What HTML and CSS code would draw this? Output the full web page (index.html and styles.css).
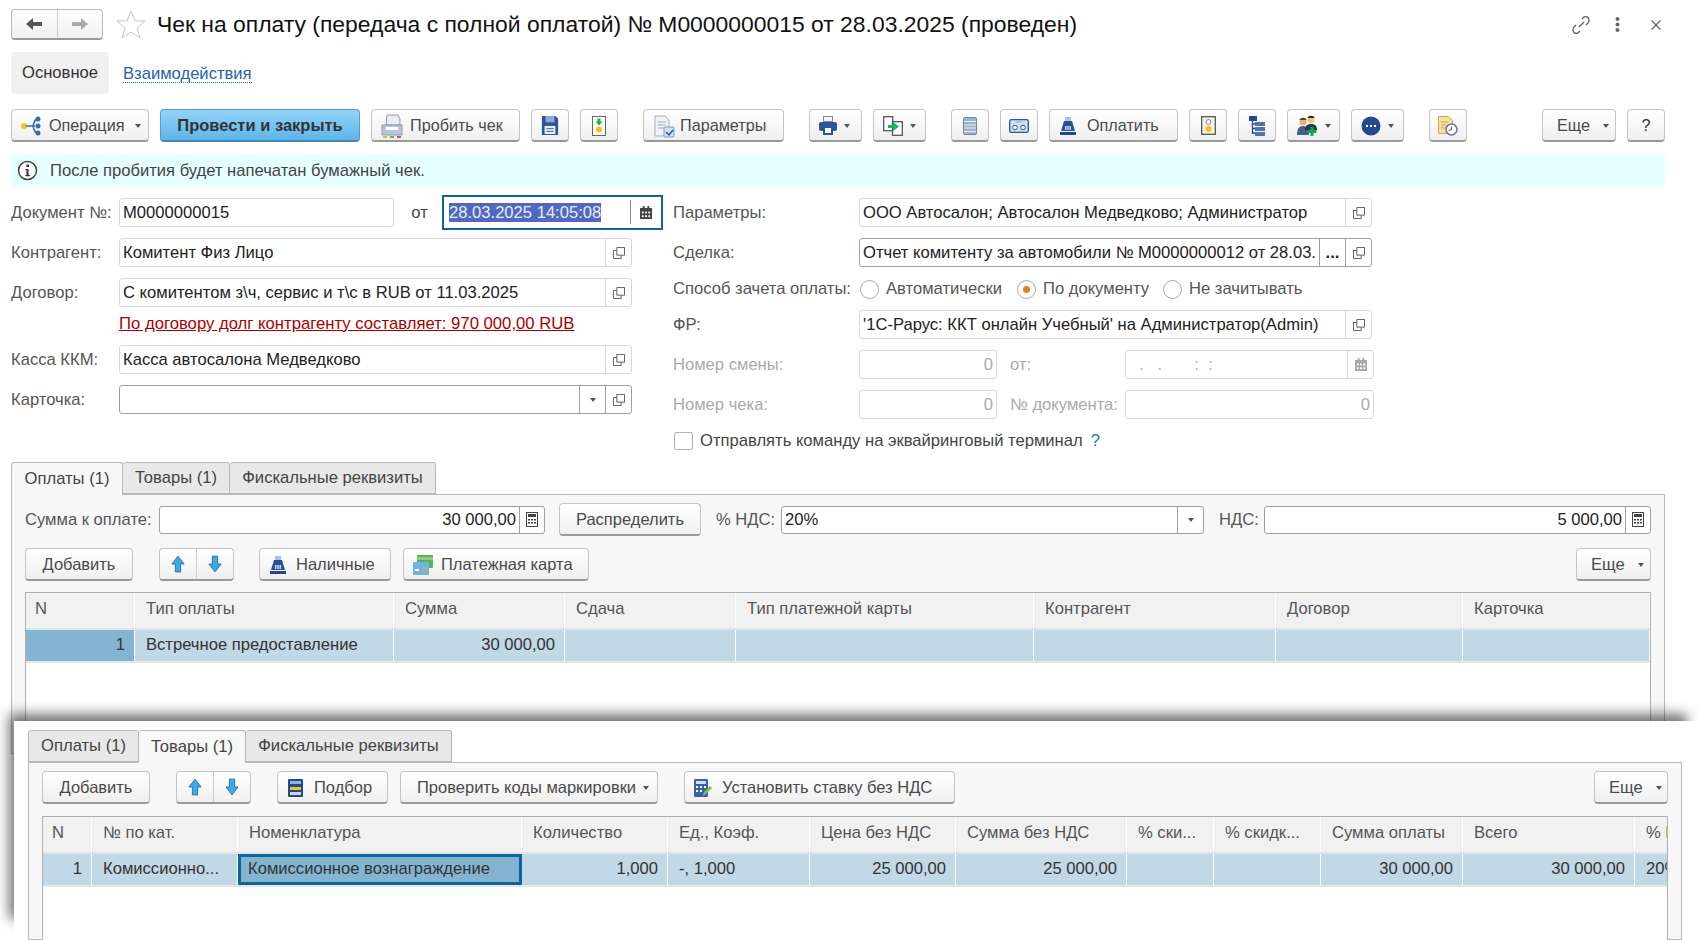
FILE: index.html
```html
<!DOCTYPE html>
<html>
<head>
    <title>Чек на оплату</title>
    <link rel="stylesheet" href="styles.css">
</head>
<body>
    <div class="titlebar">
        <div class="nav-group">
            <div class="nav-btn"><svg width="18" height="14" viewBox="0 0 18 14"><path d="M1 7l7-6v4h9v4H8v4z" fill="#555"/></svg></div>
            <div class="nav-btn"><svg width="18" height="14" viewBox="0 0 18 14"><path d="M17 7l-7-6v4H1v4h9v4z" fill="#aaa"/></svg></div>
        </div>
        <svg class="star" width="30" height="29" viewBox="0 0 30 29"><path d="M15 1l4 10h10l-8 7 3 10-9-6-9 6 3-10-8-7h10z" fill="#fff" stroke="#c4c4c4"/></svg>
        <h1 class="doc-title">Чек на оплату (передача с полной оплатой) № М0000000015 от 28.03.2025 (проведен)</h1>
        <div class="win-icons">
            <svg width="20" height="20" viewBox="0 0 20 20"><g fill="none" stroke="#666" stroke-width="1.4"><path d="M8 12l5-5"/><path d="M11 4l2-2c2-1 5 0 5 3 0 1 0 2-1 3l-2 2"/><path d="M9 16l-2 2c-2 1-5 0-5-3 0-1 0-2 1-3l2-2"/></g></svg>
            <svg class="dots" width="5" height="15" viewBox="0 0 5 15"><g fill="#666"><rect x="0.5" y="0" width="4" height="4" rx="2"/><rect x="0.5" y="5.5" width="4" height="4" rx="2"/><rect x="0.5" y="11" width="4" height="4" rx="2"/></g></svg>
            <svg class="close" width="10" height="10" viewBox="0 0 10 10"><path d="M0.5 0.5l9 9M9.5 0.5l-9 9" stroke="#666" stroke-width="1.3"/></svg>
        </div>
    </div>

    <div class="section-tabs">
        <div class="section-tab">Основное</div>
        <a class="section-link">Взаимодействия</a>
    </div>

    <div class="toolbar">
        <div class="btn w-op"><svg width="24" height="22" viewBox="0 0 24 22"><circle cx="4" cy="11" r="3" fill="#f5c518"/><path d="M6 11h9M17 4c-3 1-3 4-4 7 1 3 1 6 4 7" fill="none" stroke="#3a6cab" stroke-width="1.5"/><circle cx="18" cy="4" r="2.5" fill="#3a6cab"/><circle cx="18" cy="11" r="2.5" fill="#3a6cab"/><circle cx="18" cy="18" r="2.5" fill="#3a6cab"/></svg>Операция<span class="caret"></span></div>
        <div class="btn btn-main w-post">Провести и закрыть</div>
        <div class="btn w-chek"><svg width="24" height="24" viewBox="0 0 24 24"><path d="M7 1h11l2 4v6H6z" fill="#e8eef4" stroke="#8b9cb0"/><rect x="2" y="11" width="20" height="10" fill="#b5c7d9" stroke="#8b9cb0"/><rect x="6" y="13" width="12" height="3" fill="#fff"/><rect x="3" y="22" width="4" height="2" fill="#e8b820"/><rect x="10" y="22" width="4" height="2" fill="#5cb85c"/><rect x="17" y="22" width="4" height="2" fill="#d9534f"/></svg>Пробить чек</div>
        <div class="btn btn-icon"><svg width="18" height="19" viewBox="0 0 20 21"><path d="M1 0h15l3 3v18H1z" fill="#2c5597"/><rect x="5" y="0" width="10" height="7" fill="#8eaad3"/><rect x="4" y="11" width="12" height="9" fill="#e8edf5"/><path d="M6 14h8M6 17h8" stroke="#2c5597"/></svg></div>
        <div class="btn btn-icon"><svg width="14" height="20" viewBox="0 0 14 20"><rect x="0.5" y="0.500" width="13" height="19" fill="#fbfbf2" stroke="#666"/><path d="M5.500 2.500h3v3h2L7 9.500 3.500 5.500h2z" fill="#1fae5e"/><circle cx="7" cy="13.500" r="3" fill="#f2c21b"/></svg></div>
        <div class="btn w-param gap-l"><svg width="24" height="24" viewBox="0 0 24 24"><path d="M3 2h10l4 4v16H3z" fill="#eef3f8" stroke="#9fb2c6"/><path d="M6 8h8M6 11h8M6 14h6" stroke="#9fb2c6"/><rect x="12" y="13" width="10" height="10" rx="1" fill="#cfe0f0" stroke="#7f9cbc"/><path d="M14 18l3 3 4-5" fill="none" stroke="#2c5597" stroke-width="1.500"/></svg>Параметры</div>
        <div class="btn w-drop gap-l"><svg width="18" height="19" viewBox="0 0 18 19"><rect x="4.500" y="0.500" width="9" height="5" fill="#f2f4f7" stroke="#888"/><rect x="0" y="6" width="18" height="9" rx="2" fill="#2c5597"/><rect x="4" y="10" width="10" height="9" fill="#2c5597"/><rect x="6" y="12" width="6" height="5" fill="#fff"/></svg><span class="caret"></span></div>
        <div class="btn w-drop"><svg width="20" height="20" viewBox="0 0 20 20"><rect x="0.700" y="0.700" width="9" height="14" fill="#fff" stroke="#555" stroke-width="1.300"/><rect x="9.500" y="5.700" width="9.800" height="13.600" fill="#fff" stroke="#555" stroke-width="1.300"/><path d="M5 9h5V6l6 4.500-6 4.500v-3H5z" fill="#16b45f"/></svg><span class="caret"></span></div>
        <div class="btn btn-icon gap-l"><svg width="14" height="18" viewBox="0 0 14 18"><rect x="0.500" y="0.500" width="13" height="17" rx="1" fill="#9db4ca" stroke="#6b8aa8"/><path d="M1 4.500h12M1 8h12M1 11h12M1 14.500h12" stroke="#e6edf4"/></svg></div>
        <div class="btn btn-icon"><svg width="20" height="14" viewBox="0 0 20 14"><rect x="0.700" y="0.700" width="18.600" height="12.600" rx="1.500" fill="#cfe2f2" stroke="#2c5597" stroke-width="1.300"/><circle cx="6" cy="8.500" r="2.300" fill="#fff" stroke="#2c5597"/><circle cx="14" cy="8.500" r="2.300" fill="#fff" stroke="#2c5597"/><path d="M7 3h6" stroke="#8fa9c9"/></svg></div>
        <div class="btn w-pay"><svg width="18" height="18" viewBox="0 0 18 18"><path d="M6 0h6v4H6z" fill="#a9c4e2"/><path d="M5 4h8l3 10H2z" fill="#2c4f95"/><path d="M6 9h1.500v4H6zM8.300 9h1.500v4H8.300zM10.500 9H12v4h-1.500z" fill="#cfdcee"/><rect x="1" y="15" width="16" height="3" fill="#23468c"/></svg>Оплатить</div>
        <div class="btn btn-icon"><svg width="15" height="19" viewBox="0 0 15 19"><rect x="0.700" y="0.700" width="13.600" height="17.600" fill="#f4f2ea" stroke="#555" stroke-width="1.300"/><circle cx="7.500" cy="6" r="2.500" fill="none" stroke="#888"/><circle cx="7.500" cy="13" r="3" fill="#f2c21b"/></svg></div>
        <div class="btn btn-icon"><svg width="16" height="20" viewBox="0 0 16 20"><rect x="0" y="0" width="8" height="5" fill="#23498f"/><path d="M3.500 5v13M3.500 8h3M3.500 12.500h3M3.500 17h3" stroke="#23498f" stroke-width="1.300"/><rect x="6" y="6" width="10" height="4" fill="#4f75ad"/><rect x="6" y="11" width="10" height="4" fill="#4f75ad"/><rect x="6" y="16" width="10" height="4" fill="#4f75ad"/></svg></div>
        <div class="btn w-drop"><svg width="21" height="21" viewBox="0 0 21 21"><circle cx="6" cy="7" r="3.500" fill="#e9b26f"/><path d="M2.500 5c0-3 7-3 7 0z" fill="#6b3d16"/><path d="M0 20c0-6 2-9 6-9s6 3 6 9z" fill="#3f5f8a"/><circle cx="14" cy="5" r="3.500" fill="#f0c58a"/><path d="M10.500 3c0-3 7-3 7 0z" fill="#2b2b2b"/><path d="M8 15c0-4 2-6 6-6s6 2 6 6z" fill="#27364f"/><path d="M15 12v9M10.500 16.500h9" stroke="#0da84f" stroke-width="3"/></svg><span class="caret"></span></div>
        <div class="btn w-drop"><svg width="20" height="20" viewBox="0 0 20 20"><circle cx="10" cy="10" r="9.500" fill="#23498f"/><g fill="#fff"><rect x="5" y="9" width="2" height="2"/><rect x="9" y="9" width="2" height="2"/><rect x="13" y="9" width="2" height="2"/></g></svg><span class="caret"></span></div>
        <div class="btn btn-icon gap-l"><svg width="20" height="20" viewBox="0 0 20 20"><path d="M0.500 0.500h10l4 4v13H0.500z" fill="#f5e0a0" stroke="#c9a94f"/><path d="M3 6h7M3 9h5M3 12h4" stroke="#c9a94f"/><circle cx="13.500" cy="13.500" r="5.500" fill="#fff" stroke="#5b7fb0" stroke-width="1.500"/><path d="M13.500 10.500v3l-3 1" fill="none" stroke="#d9534f" stroke-width="1.300"/></svg></div>
        <div class="btn btn-more-drop w-more push-r">Еще<span class="caret"></span></div>
        <div class="btn btn-icon">?</div>
    </div>

    <div class="info-bar">
        <svg width="21" height="21" viewBox="0 0 21 21"><circle cx="10.500" cy="10.500" r="9" fill="#fff" stroke="#444" stroke-width="1.500"/><rect x="9.500" y="4.500" width="2.500" height="2.500" fill="#333"/><path d="M8.500 9h3v6h1.300v1.200H8.300V15h1.200v-4.800h-1z" fill="#333"/></svg>
        После пробития будет напечатан бумажный чек.
    </div>

    <div class="form">
        <div class="form-left">
            <div class="row">
                <label class="lbl">Документ №:</label>
                <div class="field w-number"><span class="val">М0000000015</span></div>
                <span class="lbl-from">от</span>
                <div class="field field-focus">
                    <span class="val"><span class="selected">28.03.2025 14:05:08</span></span>
                    <span class="fbtn btn-cal"><svg class="cal" width="12" height="13" viewBox="0 0 13 14"><path d="M0 2h3V0h2v2h3V0h2v2h3v12H0z" fill="#444"/><g fill="#fff"><rect x="2" y="6" width="2" height="2"/><rect x="5.500" y="6" width="2" height="2"/><rect x="9" y="6" width="2" height="2"/><rect x="2" y="10" width="2" height="2"/><rect x="5.500" y="10" width="2" height="2"/><rect x="9" y="10" width="2" height="2"/></g></svg></span>
                </div>
            </div>
            <div class="row">
                <label class="lbl">Контрагент:</label>
                <div class="field w-wide"><span class="val">Комитент Физ Лицо</span><span class="fbtn"><svg class="open" viewBox="0 0 14 14"><path d="M4.500 0.500h9v9h-9zM4 4H0.500v9.500h9V10" fill="none" stroke="#444"/></svg></span></div>
            </div>
            <div class="row">
                <label class="lbl">Договор:</label>
                <div class="field w-wide"><span class="val">С комитентом з\ч, сервис и т\с в RUB от 11.03.2025</span><span class="fbtn"><svg class="open" viewBox="0 0 14 14"><path d="M4.500 0.500h9v9h-9zM4 4H0.500v9.500h9V10" fill="none" stroke="#444"/></svg></span></div>
            </div>
            <a class="debt-link">По договору долг контрагенту составляет: 970 000,00 RUB</a>
            <div class="row">
                <label class="lbl">Касса ККМ:</label>
                <div class="field w-wide"><span class="val">Касса автосалона Медведково</span><span class="fbtn"><svg class="open" viewBox="0 0 14 14"><path d="M4.500 0.500h9v9h-9zM4 4H0.500v9.500h9V10" fill="none" stroke="#444"/></svg></span></div>
            </div>
            <div class="row">
                <label class="lbl">Карточка:</label>
                <div class="field w-wide field-dark"><span class="val"></span><span class="fbtn"><span class="caret"></span></span><span class="fbtn"><svg class="open" viewBox="0 0 14 14"><path d="M4.500 0.500h9v9h-9zM4 4H0.500v9.500h9V10" fill="none" stroke="#444"/></svg></span></div>
            </div>
        </div>

        <div class="form-right">
            <div class="row">
                <label class="lbl lbl-r">Параметры:</label>
                <div class="field w-right"><span class="val">ООО Автосалон; Автосалон Медведково; Администратор</span><span class="fbtn"><svg class="open" viewBox="0 0 14 14"><path d="M4.500 0.500h9v9h-9zM4 4H0.500v9.500h9V10" fill="none" stroke="#444"/></svg></span></div>
            </div>
            <div class="row">
                <label class="lbl lbl-r">Сделка:</label>
                <div class="field w-right field-dark"><span class="val">Отчет комитенту за автомобили № М0000000012 от 28.03.</span><span class="fbtn btn-more">...</span><span class="fbtn"><svg class="open" viewBox="0 0 14 14"><path d="M4.500 0.500h9v9h-9zM4 4H0.500v9.500h9V10" fill="none" stroke="#444"/></svg></span></div>
            </div>
            <div class="row row-radio">
                <label class="lbl lbl-r">Способ зачета оплаты:</label>
                <span class="radio radio-first"></span><span class="radio-text w-auto">Автоматически</span>
                <span class="radio radio-on"></span><span class="radio-text w-bydoc">По документу</span>
                <span class="radio"></span><span class="radio-text">Не зачитывать</span>
            </div>
            <div class="row">
                <label class="lbl lbl-r">ФР:</label>
                <div class="field w-right"><span class="val">'1С-Рарус: ККТ онлайн Учебный' на Администратор(Admin)</span><span class="fbtn"><svg class="open" viewBox="0 0 14 14"><path d="M4.500 0.500h9v9h-9zM4 4H0.500v9.500h9V10" fill="none" stroke="#444"/></svg></span></div>
            </div>
            <div class="row muted">
                <label class="lbl lbl-r">Номер смены:</label>
                <div class="field w-num-small"><span class="val val-right">0</span></div>
                <span class="lbl lbl-mid">от:</span>
                <div class="field w-num-big"><span class="val val-dots">.&nbsp;&nbsp;&nbsp;.&nbsp;&nbsp;&nbsp;&nbsp;&nbsp;&nbsp;&nbsp;:&nbsp;&nbsp;:</span><span class="fbtn btn-cal"><svg class="cal" width="12" height="13" viewBox="0 0 13 14"><path d="M0 2h3V0h2v2h3V0h2v2h3v12H0z" fill="#aaa"/><g fill="#fff"><rect x="2" y="6" width="2" height="2"/><rect x="5.500" y="6" width="2" height="2"/><rect x="9" y="6" width="2" height="2"/><rect x="2" y="10" width="2" height="2"/><rect x="5.500" y="10" width="2" height="2"/><rect x="9" y="10" width="2" height="2"/></g></svg></span></div>
            </div>
            <div class="row muted">
                <label class="lbl lbl-r">Номер чека:</label>
                <div class="field w-num-small"><span class="val val-right">0</span></div>
                <span class="lbl lbl-mid">№ документа:</span>
                <div class="field w-num-big"><span class="val val-right">0</span></div>
            </div>
            <div class="row-check">
                <span class="check"></span>Отправлять команду на эквайринговый терминал<span class="hint">?</span>
            </div>
        </div>
    </div>

    <div class="tabs">
        <div class="tab tab-on t-pay">Оплаты (1)</div>
        <div class="tab t-goods">Товары (1)</div>
        <div class="tab t-fisc">Фискальные реквизиты</div>
    </div>
    <div class="panel">
        <div class="pay-row">
            <span class="lbl-plain">Сумма к оплате:</span>
            <div class="field field-dark w-sum"><span class="val val-right">30 000,00</span><span class="fbtn btn-calc"><svg width="12" height="15" viewBox="0 0 12 15"><rect x="0.500" y="0.500" width="11" height="14" fill="#fff" stroke="#444"/><rect x="2" y="2" width="8" height="3" fill="#444"/><path d="M2 7h2v1.500H2zM5 7h2v1.500H5zM8 7h2v1.500H8zM2 10h2v1.500H2zM5 10h2v1.500H5zM8 10h2v1.500H8z" fill="#444"/></svg></span></div>
            <div class="btn w-split">Распределить</div>
            <span class="lbl-plain l-vat">% НДС:</span>
            <div class="field field-dark w-vat"><span class="val">20%</span><span class="fbtn"><span class="caret"></span></span></div>
            <span class="lbl-plain l-nds">НДС:</span>
            <div class="field field-dark w-nds"><span class="val val-right">5 000,00</span><span class="fbtn btn-calc"><svg width="12" height="15" viewBox="0 0 12 15"><rect x="0.500" y="0.500" width="11" height="14" fill="#fff" stroke="#444"/><rect x="2" y="2" width="8" height="3" fill="#444"/><path d="M2 7h2v1.500H2zM5 7h2v1.500H5zM8 7h2v1.500H8zM2 10h2v1.500H2zM5 10h2v1.500H5zM8 10h2v1.500H8z" fill="#444"/></svg></span></div>
        </div>
        <div class="cmd-row">
            <div class="btn w-add">Добавить</div>
            <div class="btn-pair">
                <div class="btn-half"><svg width="14" height="18" viewBox="0 0 16 20"><path d="M8 1l7 9h-4v9H5v-9H1z" fill="#3fa9e8" stroke="#1d6ea8"/></svg></div>
                <div class="btn-half"><svg width="14" height="18" viewBox="0 0 16 20"><path d="M8 19l7-9h-4V1H5v9H1z" fill="#3fa9e8" stroke="#1d6ea8"/></svg></div>
            </div>
            <div class="btn w-cash"><svg width="18" height="18" viewBox="0 0 18 18"><path d="M6 0h6v4H6z" fill="#a9c4e2"/><path d="M5 4h8l3 10H2z" fill="#2c4f95"/><path d="M6 9h1.500v4H6zM8.300 9h1.500v4H8.300zM10.500 9H12v4h-1.500z" fill="#cfdcee"/><rect x="1" y="15" width="16" height="3" fill="#23468c"/></svg>Наличные</div>
            <div class="btn w-card"><svg width="22" height="22" viewBox="0 0 22 22"><rect x="5" y="1" width="16" height="13" rx="1" fill="#5fae5f"/><rect x="5" y="3" width="16" height="3" fill="#8ccf7a"/><rect x="1" y="8" width="16" height="13" rx="1" fill="#6fb5e0"/><rect x="3" y="15" width="4" height="2" fill="#fff"/><rect x="12" y="15" width="3" height="3" fill="#e0a040"/></svg>Платежная карта</div>
            <div class="btn btn-more-drop w-more2 push-r">Еще<span class="caret"></span></div>
        </div>
        <div class="grid-box">
            <div class="grid-head pay-cols">
                <div class="hcell">N</div><div class="hcell">Тип оплаты</div><div class="hcell">Сумма</div><div class="hcell">Сдача</div><div class="hcell">Тип платежной карты</div><div class="hcell">Контрагент</div><div class="hcell">Договор</div><div class="hcell">Карточка</div>
            </div>
            <div class="grid-row pay-cols">
                <div class="cell cell-cur num">1</div><div class="cell">Встречное предоставление</div><div class="cell num">30 000,00</div><div class="cell"></div><div class="cell"></div><div class="cell"></div><div class="cell"></div><div class="cell"></div>
            </div>
        </div>
    </div>

    <div class="overlay-shadow"></div>
    <div class="overlay">
        <div class="tabs">
            <div class="tab t2-pay">Оплаты (1)</div>
            <div class="tab tab-on t2-goods">Товары (1)</div>
            <div class="tab t-fisc">Фискальные реквизиты</div>
        </div>
        <div class="panel panel-over">
            <div class="cmd-row">
                <div class="btn w-add">Добавить</div>
                <div class="btn-pair">
                    <div class="btn-half"><svg width="14" height="18" viewBox="0 0 16 20"><path d="M8 1l7 9h-4v9H5v-9H1z" fill="#3fa9e8" stroke="#1d6ea8"/></svg></div>
                    <div class="btn-half"><svg width="14" height="18" viewBox="0 0 16 20"><path d="M8 19l7-9h-4V1H5v9H1z" fill="#3fa9e8" stroke="#1d6ea8"/></svg></div>
                </div>
                <div class="btn w-pick"><svg width="17" height="20" viewBox="0 0 17 20"><rect x="1" y="1" width="15" height="18" rx="1" fill="#23498f"/><rect x="3" y="3" width="11" height="3" fill="#8fb4e0"/><rect x="3" y="9" width="11" height="3" fill="#f2c21b"/><rect x="3" y="14" width="11" height="3" fill="#c9d6e8"/></svg>Подбор</div>
                <div class="btn w-check">Проверить коды маркировки<span class="caret"></span></div>
                <div class="btn w-rate"><svg width="19" height="20" viewBox="0 0 19 20"><rect x="1" y="1" width="14" height="18" rx="1" fill="#3d5fa5"/><rect x="3" y="3" width="10" height="3" fill="#cfe0f0"/><path d="M3 8h2v2H3zM7 8h2v2H7zM11 8h2v2h-2zM3 12h2v2H3zM7 12h2v2H7z" fill="#fff"/><path d="M10 18l1-4 6-6 2 2-6 6z" fill="#7fbf3f"/></svg>Установить ставку без НДС</div>
                <div class="btn btn-more-drop w-more3 push-r">Еще<span class="caret"></span></div>
            </div>
            <div class="grid-box">
                <div class="grid-head goods-cols">
                    <div class="hcell">N</div><div class="hcell">№ по кат.</div><div class="hcell">Номенклатура</div><div class="hcell">Количество</div><div class="hcell">Ед., Коэф.</div><div class="hcell">Цена без НДС</div><div class="hcell">Сумма без НДС</div><div class="hcell">% ски...</div><div class="hcell">% скидк...</div><div class="hcell">Сумма оплаты</div><div class="hcell">Всего</div><div class="hcell">% НДС</div>
                </div>
                <div class="grid-row goods-cols">
                    <div class="cell num">1</div><div class="cell">Комиссионно...</div><div class="cell cell-edit">Комиссионное вознаграждение</div><div class="cell num">1,000</div><div class="cell">-, 1,000</div><div class="cell num">25 000,00</div><div class="cell num">25 000,00</div><div class="cell"></div><div class="cell"></div><div class="cell num">30 000,00</div><div class="cell num">30 000,00</div><div class="cell">20%</div>
                </div>
            </div>
        </div>
    </div>
</body>
</html>
```

FILE: styles.css
```css
html, body { margin: 0; padding: 0; height: 940px; overflow: hidden; background: #fff; }
body { font-family: "Liberation Sans", Arial, sans-serif; font-size: 16.6px; color: #4a4a4a; position: relative; width: 1703px; }

/* title */
.titlebar { display: flex; align-items: center; height: 31px; padding: 9px 0 0 11px; }
.nav-group { display: flex; width: 92px; height: 31px; box-sizing: border-box; border: 1px solid #bbb; border-bottom: 2px solid #999; border-radius: 4px; background: linear-gradient(#fff, #f0f0f0); }
.nav-btn { flex: 1; display: flex; align-items: center; justify-content: center; }
.nav-btn + .nav-btn { border-left: 1px solid #ccc; }
.star { margin-left: 13px; }
.doc-title { margin: 0 0 0 11px; font-size: 22.9px; font-weight: normal; color: #111; white-space: nowrap; }
.win-icons { display: flex; align-items: center; margin-left: auto; margin-right: 42px; }
.win-icons .dots { margin-left: 24px; }
.win-icons .close { margin-left: 31px; }

.section-tabs { display: flex; align-items: center; margin: 12px 0 0 11px; height: 42px; }
.section-tab { width: 98px; height: 42px; line-height: 42px; text-align: center; background: #f0f0f0; border-radius: 4px; color: #333; }
.section-link { margin: 2px 0 0 14px; color: #2a5fb0; border-bottom: 1px dotted #2a5fb0; line-height: 17px; }

/* buttons */
.toolbar { display: flex; gap: 11px; margin: 15px 38px 0 11px; height: 33px; }
.toolbar .btn { font-size: 16.2px; }
.toolbar .btn-main { font-size: 16.5px; }
.btn { display: flex; align-items: center; justify-content: center; box-sizing: border-box; height: 33px; padding-top: 1px; border: 1px solid #c4c4c4; border-bottom: 2px solid #999; border-radius: 4px; background: linear-gradient(#fff, #efefef); color: #4a4a4a; gap: 7px; white-space: nowrap; flex: none; font-size: 16.5px; }
.btn-main { background: linear-gradient(#93d3f7, #5db5ea); border-color: #5a9bc4; border-bottom-color: #4a86ad; color: #333; font-weight: bold; }
.btn-icon { width: 38px; color: #333; }
.btn-more-drop { justify-content: flex-start; padding-left: 14px; gap: 13px; }
.gap-l { margin-left: 14px; }
.push-r { margin-left: auto; }
.caret { display: inline-block; width: 0; height: 0; border: 3.5px solid transparent; border-top: 4px solid #555; border-bottom: 0; }
.w-op { width: 138px; justify-content: flex-start; padding-left: 8px; gap: 5px; }
.w-op .caret { margin-left: 6px; }
.w-post { width: 200px; }
.w-chek { width: 149px; justify-content: flex-start; padding-left: 8px; gap: 6px; }
.w-param { width: 141px; justify-content: flex-start; padding-left: 8px; gap: 4px; }
.w-drop { width: 53px; justify-content: flex-start; padding-left: 9px; gap: 7px; }
.w-pay { width: 129px; justify-content: flex-start; padding-left: 9px; gap: 10px; }
.w-more { width: 74px; }

.info-bar { display: flex; align-items: center; gap: 12px; height: 33px; margin: 12px 38px 0 11px; padding-left: 6px; background: #e6ffff; color: #444; }

/* form */
.form { display: flex; margin: 8px 0 0 11px; height: 267px; }
.form-left { width: 652px; padding-top: 3px; }
.form-right { margin-left: 10px; padding-top: 3px; }
.row { display: flex; align-items: center; height: 29px; margin-bottom: 11px; }
.lbl { width: 108px; flex: none; color: #555; white-space: nowrap; }
.lbl-r { width: 186px; }
.lbl-from { box-sizing: border-box; width: 48px; padding-left: 3px; text-align: center; color: #444; }
.lbl-mid { width: 115px; margin-left: 13px; }
.field { display: flex; box-sizing: border-box; height: 29px; border: 1px solid #d8d8d8; border-radius: 3px; background: #fff; }
.field-dark { border-color: #a0a0a0; }
.val { flex: 1; min-width: 0; padding-left: 3px; color: #222; line-height: 27px; white-space: nowrap; overflow: hidden; }
.val-right { text-align: right; padding: 0 3px 0 0; }
.fbtn { display: flex; align-items: center; justify-content: center; flex: none; width: 25px; border-left: 1px solid #d8d8d8; }
.field-dark .fbtn { border-left-color: #a0a0a0; }
.open { width: 12px; height: 12px; }
.btn-more { color: #222; font-weight: bold; line-height: 27px; }
.w-number { width: 275px; }
.field-focus { width: 221px; height: 35px; margin: -3px 0; border: 2px solid #0d659c; border-radius: 0; }
.field-focus .val { padding-left: 5px; line-height: 31px; }
.field-focus .fbtn { width: 30px; height: 24px; margin-top: 3px; border-left-color: #888; }
.selected { background: #5268c0; color: #e8ecf8; }
.w-wide { width: 513px; }
.debt-link { display: block; margin: -7px 0 8px 108px; width: max-content; font-size: 16.7px; color: #a80000; text-decoration: underline; line-height: 26px; }
.w-right { width: 513px; }
.row-radio { height: 26px; margin-bottom: 8px; margin-top: -2px; }
.radio { box-sizing: border-box; width: 19px; height: 19px; border: 1px solid #a8a8a8; border-radius: 50%; flex: none; background: #fff; display: flex; align-items: center; justify-content: center; }
.radio-first { margin-left: 1px; }
.radio-on::after { content: ""; width: 7px; height: 7px; border-radius: 50%; background: #e67e22; }
.radio-text { margin-left: 7px; color: #555; white-space: nowrap; }
.w-auto { width: 131px; }
.w-bydoc { width: 120px; }
.muted .lbl, .muted .val { color: #aaa; }
.w-num-small { width: 138px; }
.w-num-big { width: 249px; }
.w-num-big .fbtn { border-left-color: #d8d8d8; }
.val-dots { padding-left: 13px; }
.row-check { display: flex; align-items: center; height: 18px; margin-top: 13px; color: #444; }
.check { box-sizing: border-box; width: 19px; height: 18px; margin: 0 7px 0 1px; border: 1px solid #b0b0b0; border-radius: 2px; background: #fff; }
.hint { margin-left: 8px; color: #1a7bbf; }

/* tabs */
.tabs { display: flex; margin-left: 11px; height: 32px; position: relative; z-index: 1; }
.tab { box-sizing: border-box; display: flex; align-items: center; justify-content: center; height: 32px; border: 1px solid #b8b8b8; border-left: 0; border-radius: 3px 3px 0 0; background: #e8e8e8; color: #444; }
.tab-on { background: #f7f7f7; border-bottom: 0; height: 33px; }
.tabs .tab:first-child { border-left: 1px solid #b8b8b8; }
.t-pay { width: 112px; }
.t-goods { width: 107px; }
.t-fisc { width: 206px; }
.t2-pay { width: 111px; }
.t2-goods { width: 107px; }

.panel { box-sizing: border-box; width: 1654px; height: 260px; margin-left: 11px; padding: 8px 13px 0 13px; background: #f7f7f7; border: 1px solid #b8b8b8; }
.pay-row { display: flex; align-items: center; height: 33px; }
.lbl-plain { width: 134px; color: #555; flex: none; white-space: nowrap; }
.w-sum { width: 386px; }
.w-split { width: 142px; margin-left: 14px; }
.l-vat { width: 65px; margin-left: 15px; }
.w-vat { width: 423px; }
.l-nds { width: 45px; margin-left: 15px; }
.w-nds { width: 387px; }
.pay-row .field { height: 28px; background: #fff; }
.pay-row .val { line-height: 26px; }
.btn-calc { width: 24px; }
.cmd-row { display: flex; height: 33px; margin-top: 12px; }
.w-add { width: 108px; }
.btn-pair { display: flex; width: 75px; height: 33px; margin-left: 26px; box-sizing: border-box; border: 1px solid #c4c4c4; border-bottom: 2px solid #999; border-radius: 4px; background: linear-gradient(#fff, #efefef); }
.btn-half { flex: 1; display: flex; align-items: center; justify-content: center; }
.btn-half + .btn-half { border-left: 1px solid #ccc; }
.w-cash { width: 132px; margin-left: 25px; justify-content: flex-start; padding-left: 9px; gap: 9px; }
.w-card { width: 186px; margin-left: 12px; justify-content: flex-start; padding-left: 8px; gap: 7px; }
.w-more2 { width: 75px; }

/* tables */
.grid-box { box-sizing: border-box; margin-top: 11px; height: 200px; border: 1px solid #b0b0b0; border-bottom: 0; background: #fff; overflow: hidden; }
.grid-head, .grid-row { display: grid; }
.pay-cols { grid-template-columns: 109px 259px 171px 171px 298px 242px 187px 1fr; }
.goods-cols { grid-template-columns: 49px 146px 284px 146px 142px 146px 171px 87px 107px 142px 172px 60px; width: 1683px; }
.grid-head { height: 35px; background: #f1f1f1; border-bottom: 2px solid #e4e4e4; }
.hcell { padding-left: 11px; line-height: 31px; border-right: 1px solid #fff; white-space: nowrap; overflow: hidden; color: #555; }
.hcell:first-child { padding-left: 9px; }
.grid-row { height: 31px; background: #c1d8e6; border-bottom: 2px solid #e6e6e6; }
.cell { padding: 0 9px 0 11px; line-height: 29px; border-right: 1px solid #fff; white-space: nowrap; overflow: hidden; color: #333; }
.num { text-align: right; }
.cell-cur { background: #83b4d2; }
.cell-edit { box-sizing: border-box; background: #83b4d2; border: 3px solid #0d659c; line-height: 23px; padding-left: 7px; }

/* second picture over the first */
.overlay-shadow { position: absolute; left: 14px; top: 721px; width: 1678px; height: 205px; box-shadow: -5px -7px 12px rgba(0, 0, 0, 0.55); }
.overlay { box-sizing: border-box; position: absolute; left: 14px; top: 721px; width: 1689px; height: 219px; padding-top: 9px; background: #fff; overflow: hidden; }
.overlay .tabs { margin-left: 14px; }
.panel-over { margin-left: 14px; width: 1654px; height: 178px; }
.panel-over .cmd-row { margin-top: 0; }
.panel-over .grid-box { margin-top: 12px; height: 124px; }
.w-pick { width: 111px; margin-left: 26px; justify-content: flex-start; padding-left: 9px; gap: 10px; }
.w-check { width: 258px; margin-left: 12px; justify-content: flex-start; padding-left: 16px; }
.w-rate { width: 271px; margin-left: 26px; justify-content: flex-start; padding-left: 8px; gap: 10px; }
.w-more3 { width: 74px; }
```
